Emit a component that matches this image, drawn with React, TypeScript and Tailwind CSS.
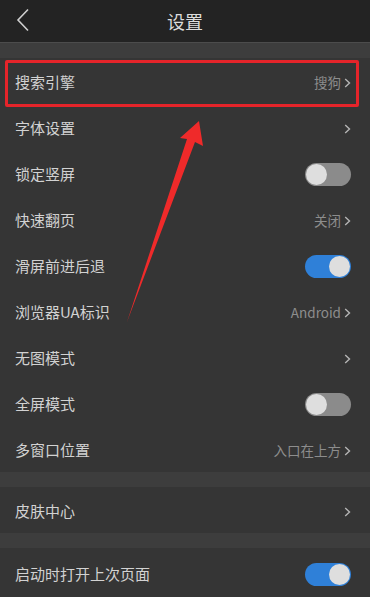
import React from "react";

type Row =
  | { label: string; kind: "link"; value?: string }
  | { label: string; kind: "toggle"; on: boolean };

const group1: Row[] = [
  { label: "搜索引擎", kind: "link", value: "搜狗" },
  { label: "字体设置", kind: "link" },
  { label: "锁定竖屏", kind: "toggle", on: false },
  { label: "快速翻页", kind: "link", value: "关闭" },
  { label: "滑屏前进后退", kind: "toggle", on: true },
  { label: "浏览器UA标识", kind: "link", value: "Android" },
  { label: "无图模式", kind: "link" },
  { label: "全屏模式", kind: "toggle", on: false },
  { label: "多窗口位置", kind: "link", value: "入口在上方" },
];

function Chevron() {
  return (
    <svg width="7" height="10" viewBox="0 0 7 10" className="ml-[3px]">
      <path d="M1.2 1 L5.5 5 L1.2 9" fill="none" stroke="#b5b5b5" strokeWidth="1.4" />
    </svg>
  );
}

function Toggle({ on }: { on: boolean }) {
  return (
    <div
      className={
        "flex h-[23px] w-[46px] items-center rounded-full px-[1px] " +
        (on ? "justify-end bg-[#2f80d8]" : "justify-start bg-[#8b8b8b]")
      }
    >
      <div className="h-[21px] w-[21px] rounded-full bg-[#dedede]" />
    </div>
  );
}

function SettingRow({ row, h = "h-[46px]" }: { row: Row; h?: string }) {
  return (
    <div className={`flex ${h} items-center justify-between bg-[#353535] pl-[15px] pr-[19px] pt-[3px]`}>
      <span className="text-[15px] text-[#d2d2d2]">{row.label}</span>
      {row.kind === "toggle" ? (
        <Toggle on={row.on} />
      ) : (
        <span className="flex items-center text-[13.5px] text-[#8d8d8d]">
          {row.value}
          <Chevron />
        </span>
      )}
    </div>
  );
}

export default function App() {
  return (
    <div
      className="relative w-[370px] bg-[#353535]"
      style={{ fontFamily: '"Noto Sans CJK SC", "Noto Sans", Roboto, sans-serif' }}
    >
      <header className="relative flex h-[43px] items-center justify-center border-b border-[#4c4c4c] bg-[#232323]">
        <svg width="14" height="24" viewBox="0 0 14 24" className="absolute left-[16px] top-[8px]">
          <path d="M12 1.5 L2 12 L12 22.5" fill="none" stroke="#cfcfcf" strokeWidth="1.6" />
        </svg>
        <span className="text-[18px] text-[#dcdcdc]">设置</span>
      </header>
      <div className="h-[15px] bg-[#3d3d3d]" />
      {group1.map((r) => (
        <SettingRow key={r.label} row={r} />
      ))}
      <div className="h-[15px] bg-[#3d3d3d]" />
      <SettingRow row={{ label: "皮肤中心", kind: "link" }} />
      <div className="h-[15px] bg-[#3d3d3d]" />
      <SettingRow row={{ label: "启动时打开上次页面", kind: "toggle", on: true }} h="h-[49px]" />

      {/* annotation overlay */}
      <div className="pointer-events-none absolute left-[5px] top-[60px] h-[47px] w-[354px] rounded-[2px] border-[3px] border-[#e5242a]" />
      <svg className="pointer-events-none absolute left-0 top-0" width="370" height="597" viewBox="0 0 370 597">
        <polygon points="199,121 203,146 195,142 127,322 187,139 180,138" fill="#ef2a2a" />
      </svg>
    </div>
  );
}
